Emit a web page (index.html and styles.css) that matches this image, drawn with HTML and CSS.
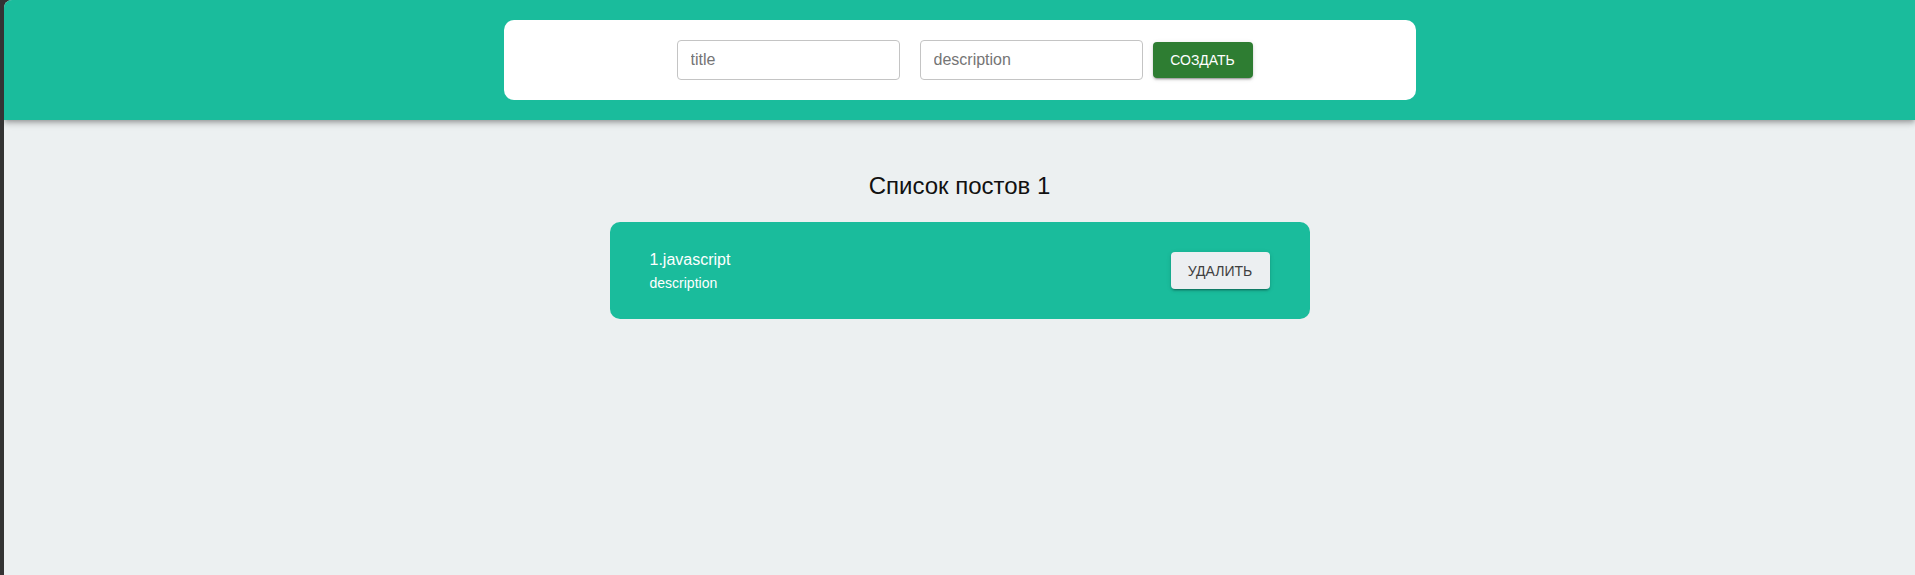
FILE: index.html
```html
<!DOCTYPE html>
<html lang="ru">
<head>
<meta charset="utf-8">
<title>Посты</title>
<link rel="stylesheet" href="styles.css">
</head>
<body>
<div class="app">
  <header class="header">
    <form class="create-form">
      <input class="field" type="text" placeholder="title">
      <input class="field" type="text" placeholder="description">
      <button class="btn btn-create" type="button">Создать</button>
    </form>
  </header>
  <main class="content">
    <h2 class="list-title">Список постов 1</h2>
    <div class="post">
      <div class="post-text">
        <div class="post-title">1.javascript</div>
        <div class="post-desc">description</div>
      </div>
      <button class="btn btn-delete" type="button">Удалить</button>
    </div>
  </main>
</div>
</body>
</html>
```

FILE: styles.css
```css
html, body {
  margin: 0;
  padding: 0;
  height: 100%;
}
body {
  background: #333333;
  font-family: "Liberation Sans", Arial, sans-serif;
  overflow: hidden;
}
.app {
  margin-left: 4px;
  min-height: 100vh;
  background: #ecf0f1;
  border-top-left-radius: 8px;
  overflow: hidden;
}
.header {
  height: 120px;
  background: #1abc9c;
  box-sizing: border-box;
  padding-top: 20px;
  box-shadow: 0 2px 4px -1px rgba(0,0,0,.2), 0 4px 5px 0 rgba(0,0,0,.14), 0 1px 10px 0 rgba(0,0,0,.12);
  position: relative;
  z-index: 1;
}
.create-form {
  width: 912px;
  height: 80px;
  margin: 0 auto;
  background: #ffffff;
  border-radius: 10px;
  display: flex;
  align-items: center;
  justify-content: center;
}
.field {
  width: 223px;
  height: 40px;
  box-sizing: border-box;
  margin: 0 10px;
  padding: 0 13px;
  border: 1px solid #c4c4c4;
  border-radius: 4px;
  font-family: "Liberation Sans", Arial, sans-serif;
  font-size: 16px;
  color: #333;
  outline: none;
}
.field::placeholder {
  color: #757575;
}
.btn {
  height: 36px;
  box-sizing: border-box;
  padding: 0 16px;
  border: none;
  border-radius: 4px;
  font-family: "Liberation Sans", Arial, sans-serif;
  font-size: 14px;
  text-transform: uppercase;
  cursor: pointer;
  box-shadow: 0 3px 1px -2px rgba(0,0,0,.2), 0 2px 2px 0 rgba(0,0,0,.14), 0 1px 5px 0 rgba(0,0,0,.12);
}
.btn-create {
  width: 100px;
  background: #2e7d32;
  color: #ffffff;
}
.content {
  display: flex;
  flex-direction: column;
  align-items: center;
  padding-top: 52px;
}
.list-title {
  margin: 0 0 22px;
  font-size: 24px;
  line-height: 28px;
  font-weight: normal;
  color: #111;
}
.post {
  width: 700px;
  height: 97px;
  box-sizing: border-box;
  padding: 0 40px;
  background: #1abc9c;
  border-radius: 10px;
  display: flex;
  align-items: center;
  justify-content: space-between;
}
.post-text {
  color: #ffffff;
}
.post-title {
  font-size: 16px;
  line-height: 24px;
}
.post-desc {
  font-size: 14px;
  line-height: 22px;
}
.btn-delete {
  width: 99px;
  height: 37px;
  background: #eceff1;
  color: #404040;
}
```
